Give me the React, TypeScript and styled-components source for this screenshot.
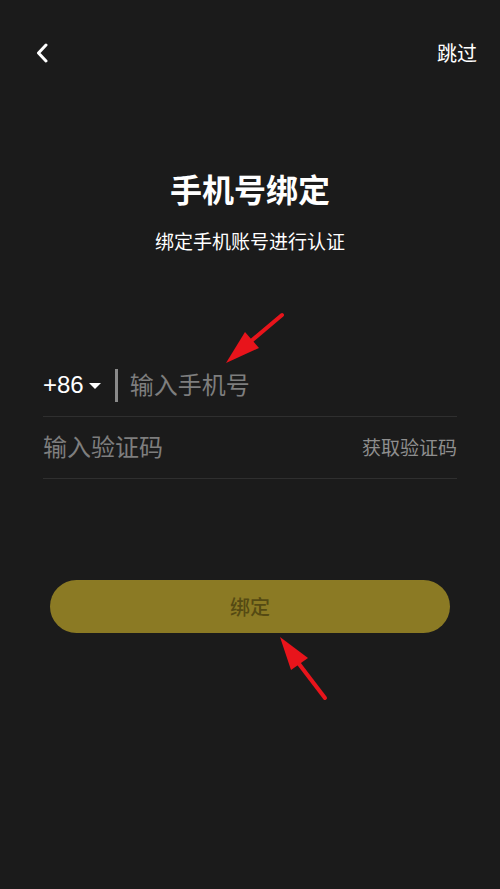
import React from "react";
import styled, { createGlobalStyle } from "styled-components";

const Global = createGlobalStyle`
  html, body {
    margin: 0;
    padding: 0;
    background: #1b1b1b;
  }
  body {
    font-family: "Noto Sans CJK SC", "Noto Sans", sans-serif;
  }
`;

const Page = styled.div`
  position: relative;
  width: 500px;
  height: 889px;
  background: #1b1b1b;
  overflow: hidden;
  display: flex;
  flex-direction: column;
`;

const Header = styled.div`
  display: flex;
  align-items: center;
  justify-content: space-between;
  height: 46px;
  margin-top: 30px;
  padding: 0 23px 0 35px;
`;

const BackButton = styled.button`
  background: none;
  border: none;
  padding: 0;
  width: 14px;
  height: 22px;
  display: flex;
  align-items: center;
  justify-content: center;
  cursor: pointer;
`;

const Skip = styled.span`
  color: #ffffff;
  font-size: 20px;
  line-height: 24px;
`;

const Title = styled.h1`
  margin: 94px 0 0;
  text-align: center;
  color: #ffffff;
  font-size: 32px;
  line-height: 36px;
  font-weight: 700;
`;

const Subtitle = styled.p`
  margin: 23px 0 0;
  text-align: center;
  color: #ffffff;
  font-size: 19px;
  line-height: 24px;
`;

const Form = styled.div`
  margin: 102px 43px 0;
  display: flex;
  flex-direction: column;
`;

const Row = styled.div`
  height: 61px;
  display: flex;
  align-items: center;
  border-bottom: 1px solid #2f2f2f;
`;

const Code = styled.span`
  color: #ffffff;
  font-family: "Liberation Sans", Arial, sans-serif;
  font-size: 24px;
  line-height: 28px;
  margin-top: -2px;
`;

const Caret = styled.span`
  width: 0;
  height: 0;
  margin-left: 5px;
  border-left: 6px solid transparent;
  border-right: 6px solid transparent;
  border-top: 6px solid #ffffff;
`;

const Divider = styled.span`
  width: 3px;
  height: 33px;
  margin: 0 12px 0 14px;
  background: #8a8a8a;
`;

const Placeholder = styled.span`
  flex: 1;
  color: #7e7e7e;
  font-size: 24px;
  line-height: 30px;
  margin-top: -3px;
`;

const GetCode = styled.span`
  color: #8e8e8e;
  font-size: 19px;
  line-height: 24px;
  margin-top: -2px;
`;

const BindButton = styled.button`
  margin: 101px 50px 0;
  height: 53px;
  border: none;
  border-radius: 27px;
  background: #8b7a24;
  color: #554a13;
  font-family: "Noto Sans CJK SC", "Noto Sans", sans-serif;
  font-size: 20px;
  font-weight: 500;
  cursor: pointer;
`;

const ArrowLayer = styled.svg`
  position: absolute;
  left: 0;
  top: 0;
  pointer-events: none;
`;

export default function App() {
  return (
    <>
      <Global />
      <Page>
        <Header>
          <BackButton aria-label="返回">
            <svg width="12" height="20" viewBox="0 0 12 20">
              <path
                d="M10 2 L2.5 10 L10 18"
                fill="none"
                stroke="#ffffff"
                strokeWidth="3"
                strokeLinecap="round"
                strokeLinejoin="round"
              />
            </svg>
          </BackButton>
          <Skip>跳过</Skip>
        </Header>
        <Title>手机号绑定</Title>
        <Subtitle>绑定手机账号进行认证</Subtitle>
        <Form>
          <Row>
            <Code>+86</Code>
            <Caret />
            <Divider />
            <Placeholder>输入手机号</Placeholder>
          </Row>
          <Row>
            <Placeholder>输入验证码</Placeholder>
            <GetCode>获取验证码</GetCode>
          </Row>
        </Form>
        <BindButton>绑定</BindButton>
        <ArrowLayer width="500" height="889" viewBox="0 0 500 889">
          <line x1="282" y1="315" x2="244" y2="347" stroke="#e8141b" strokeWidth="4" strokeLinecap="round" />
          <polygon points="226,363 245,332 259,348" fill="#e8141b" />
          <line x1="325" y1="698" x2="296" y2="660" stroke="#e8141b" strokeWidth="4" strokeLinecap="round" />
          <polygon points="280,637 308,658 291,670" fill="#e8141b" />
        </ArrowLayer>
      </Page>
    </>
  );
}
